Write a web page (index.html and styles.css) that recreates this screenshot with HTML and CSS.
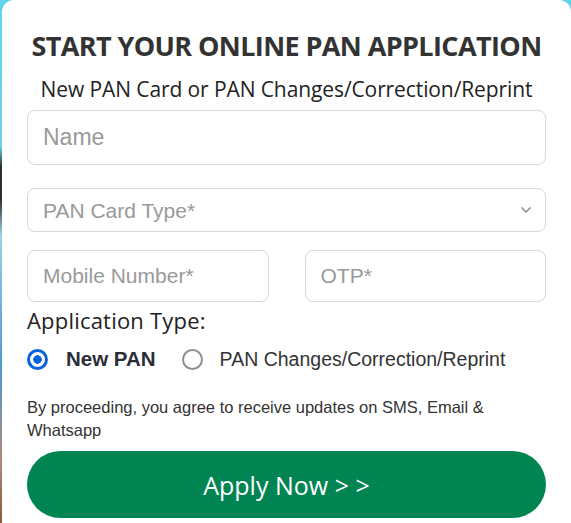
FILE: index.html
```html
<!DOCTYPE html>
<html lang="en">
  <head>
    <meta charset="UTF-8" />
    <meta name="viewport" content="width=device-width, initial-scale=1.0" />
    <title>Online PAN Application</title>
    <link rel="stylesheet" href="styles.css">
  </head>
  <body>
    <div class="pan-card">
      <h1 class="pan-title">START YOUR ONLINE PAN APPLICATION</h1>
      <p class="pan-subtitle">New PAN Card or PAN Changes/Correction/Reprint</p>

      <form class="pan-form" id="panForm">
        <input type="text" class="field field-name" placeholder="Name" />

        <div class="select-wrap">
          <select class="field field-select">
            <option value="" selected>PAN Card Type*</option>
            <option>Individual</option>
            <option>Company</option>
          </select>
          <svg class="select-arrow" width="12" height="8" viewBox="0 0 12 8">
            <path d="M1.5 1.5 L6 6 L10.5 1.5" fill="none" stroke="#888" stroke-width="1.5" />
          </svg>
        </div>

        <div class="field-row">
          <input type="tel" class="field field-small" placeholder="Mobile Number*" />
          <input type="text" class="field field-small" placeholder="OTP*" />
        </div>

        <div class="app-type">
          <p class="app-type-label">Application Type:</p>
          <div class="radio-row">
            <label class="radio-option selected">
              <span class="radio-dot"></span>
              <span>New PAN</span>
            </label>
            <label class="radio-option">
              <span class="radio-dot"></span>
              <span>PAN Changes/Correction/Reprint</span>
            </label>
          </div>
        </div>

        <p class="consent">By proceeding, you agree to receive updates on SMS, Email &amp; Whatsapp</p>

        <button type="submit" class="apply-button">Apply Now &gt; &gt;</button>
      </form>
    </div>
  </body>
</html>
```

FILE: styles.css
```css
* {
  margin: 0;
  padding: 0;
  box-sizing: border-box;
}

body {
  font-family: "Liberation Sans", Arial, sans-serif;
  background: linear-gradient(180deg, #5fd4ec 0%, #6bd0e6 28%, #2b2b2b 32%, #2e2e2e 38%, #9ad4e8 45%, #4a9ad0 70%, #b08a7a 88%, #8a5a3a 100%);
  height: 100vh;
  overflow: hidden;
}

.pan-card {
  margin-left: 2px;
  background: white;
  border-radius: 12px 12px 0 0;
  height: 100%;
  padding: 28px 25px 0 25px;
}

.pan-title {
  font-family: "Open Sans", sans-serif;
  font-size: 27px;
  font-weight: 700;
  letter-spacing: -0.6px;
  color: #333;
  text-align: center;
  line-height: 36px;
  white-space: nowrap;
}

.pan-subtitle {
  font-family: "Open Sans", sans-serif;
  font-size: 21px;
  letter-spacing: -0.1px;
  color: #222;
  text-align: center;
  line-height: 26px;
  margin-top: 12px;
  white-space: nowrap;
}

.pan-form {
  display: flex;
  flex-direction: column;
  margin-top: 8px;
}

.field {
  width: 100%;
  border: 1px solid #d5d8dd;
  border-radius: 8px;
  background: white;
  font-family: "Liberation Sans", Arial, sans-serif;
  color: #333;
  padding: 0 15px;
  outline: none;
}

.field::placeholder {
  color: #999;
}

.field-name {
  height: 55px;
  font-size: 23px;
}

.select-wrap {
  position: relative;
  margin-top: 23px;
}

.field-select {
  height: 44px;
  font-size: 21px;
  color: #999;
  appearance: none;
  -webkit-appearance: none;
}

.select-arrow {
  position: absolute;
  right: 14px;
  top: 18px;
  pointer-events: none;
}

.field-row {
  display: flex;
  gap: 36px;
  margin-top: 18px;
}

.field-small {
  height: 52px;
  font-size: 21px;
}

.app-type-label {
  font-family: "Open Sans", sans-serif;
  font-size: 22px;
  letter-spacing: 0.2px;
  color: #222;
  line-height: 28px;
  margin-top: 4px;
}

.radio-row {
  display: flex;
  align-items: center;
  gap: 26px;
  margin-top: 13px;
}

.radio-option {
  display: flex;
  align-items: center;
  gap: 17px;
  font-size: 19.5px;
  color: #333;
  cursor: pointer;
}

.radio-option.selected {
  gap: 18px;
  font-weight: 700;
  font-size: 20.5px;
  color: #2b2e36;
}

.radio-dot {
  width: 21px;
  height: 21px;
  border-radius: 50%;
  border: 2.5px solid #8e8b96;
  flex-shrink: 0;
}

.radio-option.selected .radio-dot {
  border: 3px solid #0b62e0;
  background: radial-gradient(circle, #0b62e0 0 4px, white 4.5px);
}

.consent {
  font-size: 16.5px;
  color: #333;
  line-height: 23px;
  margin-top: 25px;
}

.apply-button {
  margin-top: 9px;
  height: 67px;
  border: none;
  border-radius: 34px;
  background: #008552;
  color: white;
  font-family: "Open Sans", sans-serif;
  font-size: 25px;
  cursor: pointer;
}
```
